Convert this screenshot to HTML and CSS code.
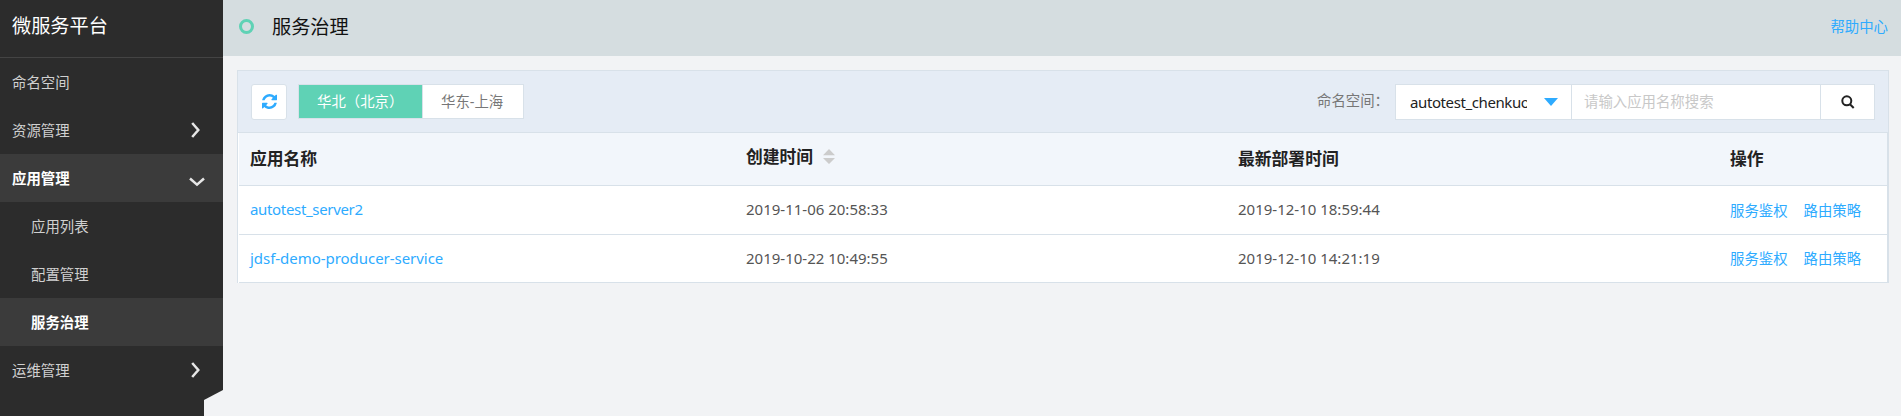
FILE: index.html
```html
<!DOCTYPE html>
<html lang="zh-CN">
<head>
<meta charset="utf-8">
<title>服务治理</title>
<link rel="stylesheet" href="styles.css">
</head>
<body>
<div class="app">
  <aside class="sidebar">
    <h1 class="brand">微服务平台</h1>
    <nav class="menu">
      <a class="item">命名空间</a>
      <a class="item">资源管理<svg class="arrow" width="10" height="16" viewBox="0 0 10 16"><path d="M1.2 1 7.3 8 1.2 15"/></svg></a>
      <a class="item active">应用管理<svg class="arrow down" width="16" height="10" viewBox="0 0 16 10"><path d="M1 1.500 8 7.600 15 1.500"/></svg></a>
      <a class="item sub">应用列表</a>
      <a class="item sub">配置管理</a>
      <a class="item sub active">服务治理</a>
      <a class="item">运维管理<svg class="arrow" width="10" height="16" viewBox="0 0 10 16"><path d="M1.2 1 7.3 8 1.2 15"/></svg></a>
    </nav>
    <div class="notch"></div>
  </aside>
  <main class="main">
    <header class="topbar">
      <span class="ring"></span>
      <h2 class="title">服务治理</h2>
      <a class="help">帮助中心</a>
    </header>
    <section class="panel">
      <div class="toolbar">
        <button class="refresh"><svg width="15" height="15" viewBox="0 0 1536 1536"><path d="M1511 928q0 5-1 7-64 268-268 434.500T764 1536q-146 0-282.500-55T238 1324l-129 129q-19 19-45 19t-45-19-19-45V960q0-26 19-45t45-19h448q26 0 45 19t19 45-19 45l-137 137q71 66 161 102t187 36q134 0 250-65t186-179q11-17 53-117 8-23 30-23h192q13 0 22.500 9.500t9.500 22.500zm25-800v448q0 26-19 45t-45 19h-448q-26 0-45-19t-19-45 19-45l138-138Q969 256 768 256q-134 0-250 65T332 500q-11 17-53 117-8 23-30 23H50q-13 0-22.500-9.500T18 608v-7q65-268 270-434.500T768 0q146 0 284 55.500T1297 212l130-129q19-19 45-19t45 19 19 45z"/></svg></button>
        <div class="tabs"><span class="tab on">华北（北京）</span><span class="tab">华东-上海</span></div>
        <span class="label">命名空间：</span>
        <div class="search">
          <div class="select"><span class="value">autotest_chenkuo</span><i class="caret"></i></div>
          <div class="field">请输入应用名称搜索</div>
          <div class="go"><svg width="14" height="14" viewBox="0 0 14 14"><circle cx="5.8" cy="5.8" r="4.5"/><path d="M9 9.2 12.7 13"/></svg></div>
        </div>
      </div>
      <div class="table">
        <div class="row head"><span>应用名称</span><span class="sortable">创建时间<svg class="sort" width="12" height="16" viewBox="0 0 12 16"><path d="M6 0 12 6.300H0zM0 9h12L6 15z"/></svg></span><span>最新部署时间</span><span>操作</span></div>
        <div class="row"><a class="name short">autotest_server2</a><span class="date">2019-11-06 20:58:33</span><span class="date">2019-12-10 18:59:44</span><span class="actions"><a>服务鉴权</a><a>路由策略</a></span></div>
        <div class="row"><a class="name">jdsf-demo-producer-service</a><span class="date">2019-10-22 10:49:55</span><span class="date">2019-12-10 14:21:19</span><span class="actions"><a>服务鉴权</a><a>路由策略</a></span></div>
      </div>
    </section>
  </main>
</div>
</body>
</html>
```
FILE: styles.css
```css
* { box-sizing: border-box; }
body {
  margin: 0;
  background: #f2f3f5;
  font-family: "Noto Sans", "Noto Sans CJK SC", sans-serif;
  font-size: 14.4px;
  overflow: hidden;
}
.app { display: flex; height: 416px; }
.sidebar {
  position: relative;
  width: 223px;
  flex: none;
  background: #2c2c2c;
  color: #d0d0d0;
}
.brand {
  margin: 0;
  height: 58px;
  padding: 0 0 5px 12px;
  border-bottom: 1px solid #444;
  color: #fff;
  font: 400 19.2px/51px "Noto Sans CJK SC", sans-serif;
}
.item {
  display: flex;
  align-items: center;
  height: 48px;
  padding: 0 0 2px 12px;
  font-family: "Noto Sans CJK SC", sans-serif;
}
.item.sub { padding-left: 31px; }
.item.active { background: #3b3b3b; color: #fff; font-weight: 700; }
.arrow {
  margin: 2px 22px 0 auto;
  fill: none;
  stroke: #e6e6e6;
  stroke-width: 2.5;
}
.arrow.down { margin: 9px 18px 0 auto; }
.notch {
  position: absolute;
  right: 0;
  bottom: 0;
  width: 19px;
  height: 26px;
  background: #f2f3f5;
  clip-path: polygon(0 10px, 100% 0, 100% 100%, 0 100%);
}
.main { flex: 1; min-width: 0; }
.topbar {
  display: flex;
  align-items: center;
  height: 56px;
  padding: 0 13px 5px 16px;
  background: #d5dde0;
}
.ring {
  width: 15px;
  height: 15px;
  margin-top: 2px;
  border: 3px solid #5fd2b5;
  border-radius: 50%;
}
.title {
  margin: 0 auto 0 18px;
  color: #111;
  font: 400 19.2px/28px "Noto Sans CJK SC", sans-serif;
}
.help, .actions, .name { color: #2eabff; }
.panel {
  width: 1652px;
  margin: 14px 0 0 14px;
  border: 1px solid #d8e1e9;
  border-bottom: 0;
  background: #fff;
}
.toolbar {
  display: flex;
  align-items: flex-start;
  height: 62px;
  padding: 13px 13px 0;
  border-bottom: 1px solid #d8e1e9;
  background: #e5ecf5;
}
.refresh {
  display: flex;
  align-items: center;
  justify-content: center;
  width: 36px;
  height: 36px;
  padding: 0 0 1px;
  border: 1px solid #d8e1e9;
  border-radius: 3px;
  background: #fff;
  fill: #2eabff;
}
.tabs {
  display: flex;
  width: 226px;
  height: 35px;
  margin-left: 11px;
  border: 1px solid #d8e1e9;
  background: #fff;
  color: #777;
  line-height: 33px;
}
.tab { flex: 1; padding-left: 18px; white-space: nowrap; }
.tab.on { flex: 0 0 124px; border-right: 1px solid #d8e1e9; background: #5fd2b5; color: #fff; }
.label { width: 78px; margin-left: auto; color: #777; line-height: 33px; white-space: nowrap; }
.search {
  display: flex;
  width: 480px;
  height: 36px;
  border: 1px solid #d8e1e9;
  background: #fff;
}
.select {
  display: flex;
  align-items: center;
  width: 176px;
  padding-left: 14px;
  border-right: 1px solid #d8e1e9;
}
.value {
  width: 117px;
  margin-top: -1px;
  overflow: hidden;
  color: #222;
  font-size: 15px;
  letter-spacing: -0.4px;
}
.caret {
  margin: -1px 0 0 17px;
  border: 7px solid transparent;
  border-top: 8px solid #2eabff;
  border-bottom: 0;
}
.field { flex: 1; padding-left: 12px; color: #c8c8c8; line-height: 34px; }
.go {
  display: flex;
  align-items: center;
  justify-content: center;
  width: 54px;
  border-left: 1px solid #d8e1e9;
  fill: none;
  stroke: #222;
  stroke-width: 2;
}
.table { margin-left: 1px; border-right: 1px solid #d8e1e9; }
.row {
  display: grid;
  grid-template-columns: 496px 492px 492px 1fr;
  align-items: center;
  height: 49px;
  padding: 0 0 2px 11px;
  border-bottom: 1px solid #d8e1e9;
  color: #555;
}
.row:last-child { height: 48px; }
.head {
  height: 53px;
  color: #222;
  background: #f2f6fb;
  font: 700 16.8px/24px "Noto Sans CJK SC", sans-serif;
}
.sortable { display: flex; align-items: center; margin-top: -5px; }
.sort { margin: 2px 0 0 10px; fill: #ccc; }
.name, .date { font-size: 15px; }
.name { letter-spacing: -0.04px; }
.name.short { letter-spacing: -0.33px; }
.actions { display: flex; gap: 16px; }
```
